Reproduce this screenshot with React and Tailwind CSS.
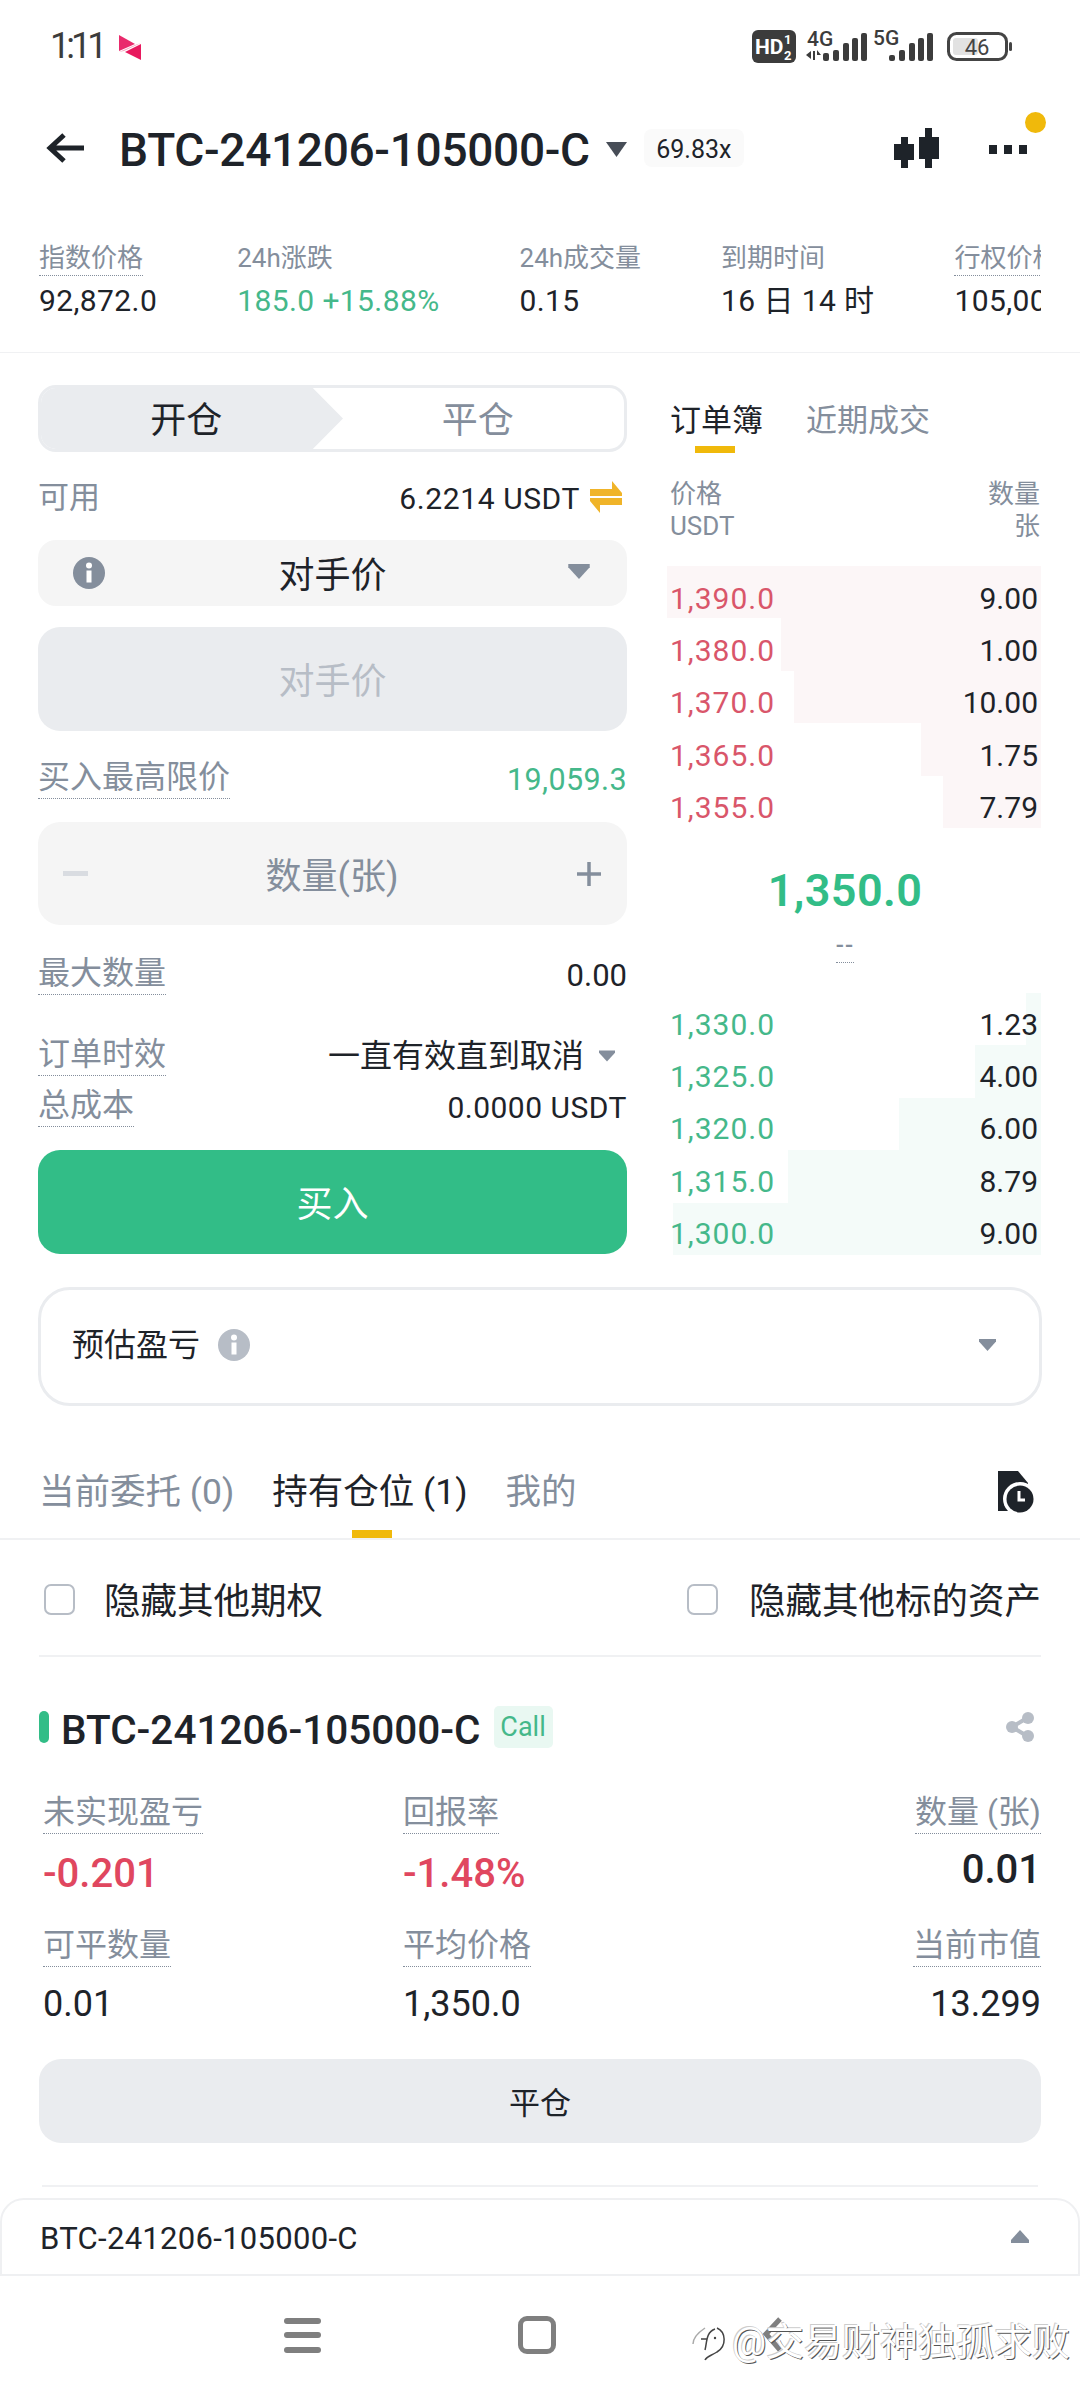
const SANS = "font-['Roboto','Noto_Sans_CJK_SC',sans-serif]";

function Status() {
  return (
    <div className="h-[92px] relative flex items-center pl-[50px]">
      <span className="w-[69px] text-[36px] text-[#3c3c3c] font-normal tracking-[-4px] leading-none">1:11</span>
      <svg className="mt-[2px]" width="22" height="25" viewBox="0 0 22 25">
        <path d="M0 0 L16 9 L0 16 Z" fill="#e92a6c" />
        <path d="M0 17 L16 10 L22 8 L5 16 Z" fill="#f7a3bf" />
        <path d="M22 9 V25 L6 17 Z" fill="#e8195e" />
      </svg>
      <svg className="absolute left-[750px] top-[26px]" width="270" height="40" viewBox="750 26 270 40">
        <rect x="752" y="30" width="44" height="33" rx="6" fill="#3c3c3c" />
        <text x="755" y="54" fontSize="21" fontWeight="700" fill="#fff" fontFamily="Roboto">HD</text>
        <text x="784" y="44" fontSize="13" fontWeight="700" fill="#fff" fontFamily="Roboto">1</text>
        <text x="784" y="60" fontSize="13" fontWeight="700" fill="#fff" fontFamily="Roboto">2</text>
        <text x="807" y="46" fontSize="21" fontWeight="500" fill="#3c3c3c" fontFamily="Roboto">4G</text>
        <path d="M806 55 l5 -4 v8 Z M813 51 h2 v9 h-2 Z M817 50 l4 5 h-4 Z" fill="#3c3c3c" />
        {[[823, 53], [833, 50], [843, 43], [852, 38], [861, 33]].map(([x, t]) => (
          <rect key={x} x={x} y={t} width="6" height={61 - t} rx="2" fill="#3c3c3c" />
        ))}
        <text x="873" y="45" fontSize="21" fontWeight="500" fill="#3c3c3c" fontFamily="Roboto">5G</text>
        {[[889, 55], [899, 50], [909, 43], [918, 38], [927, 33]].map(([x, t]) => (
          <rect key={x} x={x} y={t} width="6" height={61 - t} rx="2" fill="#3c3c3c" />
        ))}
        <rect x="948.5" y="33.5" width="58" height="26" rx="8" fill="none" stroke="#444" strokeWidth="3" />
        <rect x="953" y="38" width="25" height="17" rx="3" fill="#e2e2e2" />
        <text x="977" y="55" fontSize="22" textAnchor="middle" fill="#444" fontFamily="Roboto">46</text>
        <rect x="1009" y="42" width="3" height="9" rx="1.5" fill="#444" />
      </svg>
    </div>
  );
}

function Header() {
  return (
    <div className="h-[112px] relative flex items-center pl-[46px]">
      <svg width="40" height="32" viewBox="0 0 40 32">
        <path d="M38 16 H5 M18 3 L4 16 L18 29" fill="none" stroke="#1e2329" strokeWidth="5" />
      </svg>
      <span className="ml-[33px] pt-[3px] text-[46px] font-medium text-[#1e2329] leading-none tracking-[-0.3px]">BTC-241206-105000-C</span>
      <svg className="ml-[16px] mt-[3px]" width="21" height="15" viewBox="0 0 21 15">
        <path d="M0 0 H21 L10.5 15 Z" fill="#474d57" />
      </svg>
      <span className="ml-[17px] w-[100px] h-[38px] pt-[3px] rounded-[8px] bg-[#fafafa] flex items-center justify-center text-[25px] text-[#1e2329]">69.83x</span>
      <svg className="absolute left-[894px] top-[36px]" width="46" height="40" viewBox="0 0 46 40">
        <path d="M7 9 H14 V16 H20 V32 H14 V40 H7 V32 H0 V16 H7 Z" fill="#1e2329" />
        <path d="M31 0 H38 V9 H45 V31 H38 V40 H31 V31 H25 V9 H31 Z" fill="#1e2329" />
      </svg>
      <div className="absolute left-[989px] top-[53px] flex gap-[7px]">
        <i className="w-[8px] h-[9px] bg-[#1e2329]" />
        <i className="w-[8px] h-[9px] bg-[#1e2329]" />
        <i className="w-[8px] h-[9px] bg-[#1e2329]" />
      </div>
      <i className="absolute left-[1025px] top-[20px] w-[21px] h-[21px] rounded-full bg-[#f0b90b]" />
    </div>
  );
}

function Stat({ label, value, dotted, green }) {
  return (
    <div className="shrink-0 flex flex-col items-start">
      <span className={`text-[26px] leading-[34px] text-[#848e9c] whitespace-nowrap ${dotted ? "border-b border-dotted border-[#848e9c]" : "border-b border-transparent"}`}>{label}</span>
      <span className={`mt-[7px] text-[30px] leading-[36px] whitespace-nowrap tracking-[0.4px] ${green ? "text-[#45b88a]" : "text-[#1e2329]"}`}>{value}</span>
    </div>
  );
}

function Stats() {
  return (
    <div className="h-[149px] border-b border-[#f0f1f3]">
      <div className="ml-[39px] w-[1002px] pt-[37px] flex gap-[80px] overflow-hidden">
        <Stat label="指数价格" value="92,872.0" dotted />
        <Stat label="24h涨跌" value="185.0 +15.88%" green />
        <Stat label="24h成交量" value="0.15" />
        <Stat label="到期时间" value="16 日 14 时" />
        <Stat label="行权价格" value="105,000.0" dotted />
      </div>
    </div>
  );
}

function Caret({ className = "", w = 22, h = 15, fill = "#848e9c" }) {
  return (
    <svg className={className} width={w} height={h} viewBox="0 0 20 14">
      <path d="M0 0 H20 V3 L10 14 L0 3 Z" fill={fill} />
    </svg>
  );
}

function Info({ fill, className = "" }) {
  return (
    <svg className={className} width="32" height="32" viewBox="0 0 32 32">
      <circle cx="16" cy="16" r="16" fill={fill} />
      <rect x="13.5" y="13.5" width="5" height="12" fill="#fff" />
      <circle cx="16" cy="8.5" r="3" fill="#fff" />
    </svg>
  );
}

function Dotted({ children }) {
  return <span className="text-[32px] leading-[34px] pb-[4px] text-[#848e9c] border-b border-dotted border-[#848e9c] whitespace-nowrap">{children}</span>;
}

function OrderForm() {
  return (
    <div className="w-[589px] shrink-0">
      <div className="h-[67px] relative rounded-[18px] border-[3px] border-[#eaecef] flex items-center overflow-hidden">
        <div className="absolute left-0 top-0 bottom-0 w-[302px] bg-[#eaecef] [clip-path:polygon(0_0,90%_0,100%_50%,90%_100%,0_100%)]" />
        <span className="relative w-[292px] pt-[5px] text-center text-[36px] text-[#1e2329]">开仓</span>
        <span className="relative w-[294px] pt-[5px] text-center text-[36px] text-[#848e9c]">平仓</span>
      </div>
      <div className="mt-[24px] h-[42px] pt-[3px] flex items-center justify-between">
        <span className="text-[31px] text-[#848e9c]">可用</span>
        <span className="flex items-center text-[30px] text-[#1e2329] tracking-[0.6px]">
          6.2214 USDT
          <svg className="ml-[9px] mr-[4px] mt-[-4px]" width="34" height="34" viewBox="0 0 34 34">
            <path d="M1 9 H23 V1 L33 13 V16 H1 Z" fill="#f0b429" />
            <path d="M33 25 H11 V33 L1 21 V18 H33 Z" fill="#f0b429" />
          </svg>
        </span>
      </div>
      <div className="mt-[22px] h-[66px] rounded-[18px] bg-[#f5f5f5] relative flex items-center justify-center">
        <Info fill="#848e9c" className="absolute left-[35px] top-[17px]" />
        <span className="pt-[5px] text-[36px] text-[#1e2329]">对手价</span>
        <Caret className="absolute right-[37px] top-[24px]" />
      </div>
      <div className="mt-[21px] h-[104px] pt-[6px] rounded-[22px] bg-[#eaecef] flex items-center justify-center text-[36px] text-[#b7bdc6]">对手价</div>
      <div className="mt-[29px] flex items-start justify-between h-[62px]">
        <Dotted>买入最高限价</Dotted>
        <span className="mt-[3px] text-[30.5px] leading-[34px] text-[#45b88a] tracking-[0.4px]">19,059.3</span>
      </div>
      <div className="h-[103px] rounded-[22px] bg-[#f5f5f5] flex items-center justify-between px-[25px]">
        <i className="w-[25px] h-[5px] bg-[#d9dce1]" />
        <span className="pt-[6px] text-[36px] text-[#848e9c]">数量(张)</span>
        <svg width="26" height="26" viewBox="0 0 26 26"><path d="M13 1 V25 M1 13 H25" stroke="#848e9c" strokeWidth="3.5" /></svg>
      </div>
      <div className="mt-[31px] flex items-start justify-between h-[81px]">
        <Dotted>最大数量</Dotted>
        <span className="mt-[3px] text-[31px] leading-[34px] text-[#1e2329]">0.00</span>
      </div>
      <div className="flex items-start justify-between h-[51px]">
        <Dotted>订单时效</Dotted>
        <span className="flex items-center text-[32px] leading-[38px] text-[#1e2329]">一直有效直到取消<Caret className="ml-[15px] mr-[12px]" w={16} h={12} /></span>
      </div>
      <div className="flex items-start justify-between h-[62px]">
        <Dotted>总成本</Dotted>
        <span className="mt-[3px] text-[30px] leading-[34px] text-[#1e2329] tracking-[0.5px]">0.0000 USDT</span>
      </div>
      <div className="h-[104px] pt-[6px] rounded-[22px] bg-[#32bd87] flex items-center justify-center text-[36px] text-white">买入</div>
    </div>
  );
}

function Row({ price, qty, from, red }) {
  return (
    <div className={`relative h-[52.4px] flex items-center justify-between pl-[3px] pr-[3px] ${red ? "pt-[12px]" : "pt-[10px]"}`}>
      <i className={`absolute top-0 bottom-0 right-0 ${red ? "bg-[#fcf6f7]" : "bg-[#f4fbf9]"}`} style={{ left: from }} />
      <span className={`relative text-[30px] tracking-[1px] ${red ? "text-[#d9566a]" : "text-[#45b88a]"}`}>{price}</span>
      <span className="relative text-[30px] text-[#1e2329]">{qty}</span>
    </div>
  );
}

function OrderBook() {
  const asks = [["1,390.0", "9.00", 0], ["1,380.0", "1.00", 114], ["1,370.0", "10.00", 127], ["1,365.0", "1.75", 254], ["1,355.0", "7.79", 276]];
  const bids = [["1,330.0", "1.23", 359], ["1,325.0", "4.00", 308], ["1,320.0", "6.00", 232], ["1,315.0", "8.79", 121], ["1,300.0", "9.00", 6]];
  return (
    <div className="w-[374px] ml-[40px] shrink-0">
      <div className="pl-[3px] flex gap-[43px] h-[68px] text-[31px] leading-[72px]">
        <span className="relative text-[#1e2329]">订单簿
          <i className="absolute left-[25px] bottom-0 w-[40px] h-[7px] bg-[#f0b90b]" />
        </span>
        <span className="text-[#848e9c]">近期成交</span>
      </div>
      <div className="mt-[25px] h-[88px] flex justify-between pl-[3px] pr-[1px] text-[26px] leading-[32px] text-[#848e9c]">
        <span>价格<br />USDT</span>
        <span className="text-right">数量<br />张</span>
      </div>
      {asks.map(([p, q, f]) => <Row key={p} price={p} qty={q} from={f} red />)}
      <div className="h-[165px] mr-[18px] flex flex-col items-center">
        <span className="mt-[33px] text-[45px] leading-[60px] font-semibold text-[#32bd87] tracking-[0.4px]">1,350.0</span>
        <span className="mt-[8px] h-[34px] border-b border-dotted border-[#848e9c] text-[24px] leading-[32px] text-[#848e9c] font-medium tracking-[1px]">--</span>
      </div>
      {bids.map(([p, q, f]) => <Row key={p} price={p} qty={q} from={f} />)}
    </div>
  );
}

function PnlCard() {
  return (
    <div className="mt-[32px] mx-[38px] h-[119px] pb-[3px] rounded-[32px] border-[3px] border-[#eaecef] flex items-center pl-[31px] pr-[43px]">
      <span className="text-[32px] text-[#1e2329]">预估盈亏</span>
      <Info fill="#b7bdc6" className="ml-[18px]" />
      <Caret className="ml-auto" w={17} h={12} />
    </div>
  );
}

function Tabs() {
  return (
    <div className="mt-[33px] h-[101px] border-b-2 border-[#f0f1f3] relative pl-[39px] flex gap-[38px] items-center text-[35.5px] pt-[8px]">
      <span className="text-[#848e9c]">当前委托 (0)</span>
      <span className="text-[#1e2329] relative">持有仓位 (1)</span>
      <span className="text-[#848e9c]">我的</span>
      <i className="absolute left-[352px] bottom-0 w-[40px] h-[8px] bg-[#f0b90b]" />
      <svg className="absolute left-[998px] top-[32px]" width="36" height="42" viewBox="0 0 36 42">
        <path d="M0 0 H20 L30 12 V40 H0 Z" fill="#1e2329" />
        <circle cx="22" cy="28" r="17" fill="#fff" />
        <circle cx="22" cy="28" r="13.5" fill="#1e2329" />
        <path d="M21 20 V29 H27" fill="none" stroke="#fff" strokeWidth="3" />
      </svg>
    </div>
  );
}

function Check({ children, ml }) {
  return (
    <span className="flex items-center">
      <i className="w-[31px] h-[31px] rounded-[7px] border-[2.5px] border-[#b7bdc6]" />
      <span className={`${ml} mt-[4px] text-[36.5px] text-[#1e2329]`}>{children}</span>
    </span>
  );
}

function Checks() {
  return (
    <div className="h-[117px] pt-[5px] mx-[39px] border-b-2 border-[#f0f1f3] flex items-center justify-between pl-[5px]">
      <Check ml="ml-[29px]">隐藏其他期权</Check>
      <Check ml="ml-[31px]">隐藏其他标的资产</Check>
    </div>
  );
}

function Cell({ label, value, big, red, right }) {
  const mt = big ? (right ? "mt-[10px]" : "mt-[14px]") : "mt-[11px]";
  return (
    <div className={`flex flex-col ${right ? "items-end" : "items-start"}`}>
      <Dotted>{label}</Dotted>
      <span className={`${big ? "text-[40px] font-medium" : "text-[36px]"} leading-[52px] ${mt} ${red ? "text-[#e0475f]" : "text-[#1e2329]"}`}>{value}</span>
    </div>
  );
}

function Position() {
  return (
    <div className="mx-[39px]">
      <div className="mt-[48px] h-[44px] relative flex items-center">
        <i className="w-[10px] h-[32px] rounded-full bg-[#32bd87]" />
        <span className="ml-[12px] pt-[6px] text-[40.5px] font-medium text-[#1e2329] leading-none">BTC-241206-105000-C</span>
        <span className="ml-[13px] w-[59px] h-[42px] rounded-[5px] bg-[#e9f8f2] flex items-center justify-center text-[27px] text-[#45b88a]">Call</span>
        <svg className="ml-auto mr-[7px]" width="28" height="30" viewBox="0 0 28 30">
          <path d="M21 6 L6 15 L21 24" stroke="#b7bdc6" strokeWidth="4" fill="none" />
          <circle cx="22" cy="6" r="6" fill="#b7bdc6" /><circle cx="6" cy="15" r="6" fill="#b7bdc6" /><circle cx="22" cy="24" r="6" fill="#b7bdc6" />
        </svg>
      </div>
      <div className="mt-[46px] pl-[4px] grid grid-cols-[360px_1fr_auto] gap-y-[28px]">
        <Cell label="未实现盈亏" value="-0.201" big red />
        <Cell label="回报率" value="-1.48%" big red />
        <Cell label="数量 (张)" value="0.01" big right />
        <Cell label="可平数量" value="0.01" />
        <Cell label="平均价格" value="1,350.0" />
        <Cell label="当前市值" value="13.299" right />
      </div>
      <div className="mt-[29px] h-[84px] pt-[6px] rounded-[22px] bg-[#eaecef] flex items-center justify-center text-[31px] text-[#1e2329]">平仓</div>
      <div className="mt-[42px] h-[2px] mx-[3px] bg-[#f0f1f3]" />
    </div>
  );
}

function Footer() {
  return (
    <>
      <div className="mt-[11px] h-[78px] rounded-t-[24px] border-2 border-[#eff0f2] flex items-center justify-between pl-[38px] pr-[49px]">
        <span className="pt-[4px] text-[31px] tracking-[0.3px] text-[#1e2329]">BTC-241206-105000-C</span>
        <svg width="18" height="13" viewBox="0 0 18 13"><path d="M9 0 L18 10 V13 H0 V10 Z" fill="#848e9c" /></svg>
      </div>
      <div className="relative h-[124px]">
        <div className="absolute left-[284px] top-[42px] w-[37px] flex flex-col gap-[8.5px]">
          <i className="h-[6px] rounded-[3px] bg-[#7f7f7f]" />
          <i className="h-[6px] rounded-[3px] bg-[#7f7f7f]" />
          <i className="h-[6px] rounded-[3px] bg-[#7f7f7f]" />
        </div>
        <i className="absolute left-[518px] top-[40px] w-[38px] h-[38px] rounded-[9px] border-[5px] border-[#7f7f7f]" />
        <svg className="absolute left-[763px] top-[41px]" width="20" height="36" viewBox="0 0 20 36">
          <path d="M17 2 L3 17 L17 33" fill="none" stroke="#7f7f7f" strokeWidth="5" />
        </svg>
        <div className="absolute left-[691px] top-[46px] flex items-center text-white [text-shadow:1px_1px_0_#555,-1px_-1px_0_#ccc]">
          <svg width="36" height="40" viewBox="0 0 36 40">
            <path d="M26 6 C35 10 36 24 26 30 C20 34 16 34 14 38" fill="none" stroke="#444" strokeWidth="1.5" />
            <path d="M14 6 C8 10 2 16 2 22" fill="none" stroke="#aaa" strokeWidth="1.5" />
            <path d="M14 28 C16 20 15 10 24 7 M10 17 H16" fill="none" stroke="#444" strokeWidth="1.5" />
            <circle cx="24" cy="16" r="1.2" fill="#444" />
          </svg>
          <span className="ml-[5px] text-[38px] leading-[40px] whitespace-nowrap">@交易财神独孤求败</span>
        </div>
      </div>
    </>
  );
}

export default function App() {
  return (
    <div className={`w-[1080px] h-[2400px] bg-white overflow-hidden ${SANS}`}>
      <Status />
      <Header />
      <Stats />
      <div className="pt-[32px] pl-[38px] flex">
        <OrderForm />
        <OrderBook />
      </div>
      <PnlCard />
      <Tabs />
      <Checks />
      <Position />
      <Footer />
    </div>
  );
}
